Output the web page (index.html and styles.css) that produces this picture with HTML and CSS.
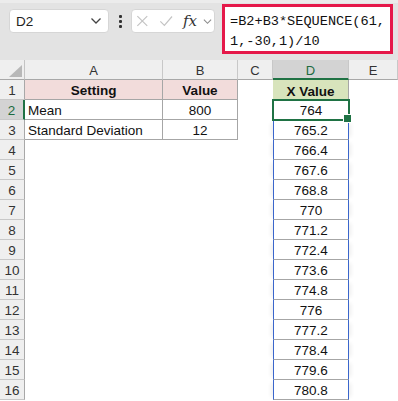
FILE: index.html
```html
<!DOCTYPE html>
<html>
<head>
<meta charset="utf-8">
<link rel="stylesheet" href="styles.css">
</head>
<body>
<div class="app">
  <div class="toolbar">
    <div class="namebox">
      <span class="ref">D2</span>
      <svg class="chev" width="12" height="8" viewBox="0 0 12 8"><path d="M1.5 1.5 L6 6 L10.5 1.5" fill="none" stroke="#444" stroke-width="1.3"/></svg>
    </div>
    <div class="dots"><i></i><i></i><i></i></div>
    <div class="fxbox">
      <svg width="14" height="14" viewBox="0 0 14 14"><path d="M1.5 1.5 L12.5 12.5 M12.5 1.5 L1.5 12.5" stroke="#c4c4c4" stroke-width="1.3" fill="none"/></svg>
      <svg width="16" height="14" viewBox="0 0 16 14"><path d="M1.5 7.5 L6 12 L14.5 2" stroke="#c4c4c4" stroke-width="1.3" fill="none"/></svg>
      <span class="fx">fx</span>
      <svg class="fxchev" width="10" height="7" viewBox="0 0 10 7"><path d="M1 1.5 L5 5.5 L9 1.5" fill="none" stroke="#8a8a8a" stroke-width="1.2"/></svg>
    </div>
    <div class="formula">=B2+B3*SEQUENCE(61,<br>1,-30,1)/10</div>
  </div>
  <div class="grid">
    <div class="corner"><span class="tri"></span></div>
    <div class="ch">A</div><div class="ch">B</div><div class="ch">C</div><div class="ch chsel">D</div><div class="ch">E</div>

    <div class="rh">1</div><div class="c tb th-pink">Setting</div><div class="c tb th-pink">Value</div><div class="c"></div><div class="c th-green">X Value</div><div class="c"></div>
    <div class="rh rhsel">2</div><div class="c tb left">Mean</div><div class="c tb">800</div><div class="c"></div><div class="c sel">764</div><div class="c"></div>
    <div class="rh">3</div><div class="c tb left">Standard Deviation</div><div class="c tb">12</div><div class="c"></div><div class="c sp">765.2</div><div class="c"></div>
    <div class="rh">4</div><div class="c"></div><div class="c"></div><div class="c"></div><div class="c sp">766.4</div><div class="c"></div>
    <div class="rh">5</div><div class="c"></div><div class="c"></div><div class="c"></div><div class="c sp">767.6</div><div class="c"></div>
    <div class="rh">6</div><div class="c"></div><div class="c"></div><div class="c"></div><div class="c sp">768.8</div><div class="c"></div>
    <div class="rh">7</div><div class="c"></div><div class="c"></div><div class="c"></div><div class="c sp">770</div><div class="c"></div>
    <div class="rh">8</div><div class="c"></div><div class="c"></div><div class="c"></div><div class="c sp">771.2</div><div class="c"></div>
    <div class="rh">9</div><div class="c"></div><div class="c"></div><div class="c"></div><div class="c sp">772.4</div><div class="c"></div>
    <div class="rh">10</div><div class="c"></div><div class="c"></div><div class="c"></div><div class="c sp">773.6</div><div class="c"></div>
    <div class="rh">11</div><div class="c"></div><div class="c"></div><div class="c"></div><div class="c sp">774.8</div><div class="c"></div>
    <div class="rh">12</div><div class="c"></div><div class="c"></div><div class="c"></div><div class="c sp">776</div><div class="c"></div>
    <div class="rh">13</div><div class="c"></div><div class="c"></div><div class="c"></div><div class="c sp">777.2</div><div class="c"></div>
    <div class="rh">14</div><div class="c"></div><div class="c"></div><div class="c"></div><div class="c sp">778.4</div><div class="c"></div>
    <div class="rh">15</div><div class="c"></div><div class="c"></div><div class="c"></div><div class="c sp">779.6</div><div class="c"></div>
    <div class="rh">16</div><div class="c"></div><div class="c"></div><div class="c"></div><div class="c sp">780.8</div><div class="c"></div>
  </div>
</div>
</body>
</html>
```
FILE: styles.css
```css
* { box-sizing: border-box; }
html, body { margin: 0; padding: 0; background: #fff; }
body { font-family: "Liberation Sans", Arial, sans-serif; color: #111; }
.app { width: 398px; height: 401px; overflow: hidden; }

.toolbar {
  height: 60px;
  display: flex;
  align-items: flex-start;
  background: linear-gradient(#ececec 0, #ececec 3px, #e3e3e3 3px);
}
.namebox {
  margin: 9px 0 0 9px;
  width: 100px;
  height: 24px;
  background: #fff;
  border: 1px solid #d6d6d6;
  border-radius: 4px;
  display: flex;
  align-items: center;
  justify-content: space-between;
  padding: 0 6px 0 6px;
}
.ref { font-size: 13.5px; color: #222; }
.dots {
  width: 22px;
  height: 24px;
  margin-top: 9px;
  display: flex;
  flex-direction: column;
  align-items: center;
  justify-content: center;
  gap: 2px;
}
.dots i { display: block; width: 3px; height: 3px; background: #333; border-radius: 1px; }
.fxbox {
  margin-top: 9px;
  width: 84px;
  height: 24px;
  background: #fff;
  border: 1px solid #d6d6d6;
  border-radius: 4px;
  display: flex;
  align-items: center;
  padding: 0 2px 0 4px;
  gap: 10px;
}
.fx {
  font-family: "DejaVu Serif", "Liberation Serif", serif;
  font-style: italic;
  font-size: 15px;
  color: #333;
  line-height: 1;
}
.fxchev { margin-left: -4px; }
.formula {
  margin: 4px 0 0 7px;
  width: 171px;
  height: 50px;
  background: #fff;
  border: 3px solid #e5194a;
  font-family: "Liberation Mono", "DejaVu Sans Mono", monospace;
  font-size: 13.6px;
  line-height: 20px;
  padding: 5px 0 0 5px;
  color: #111;
  white-space: nowrap;
}

.grid {
  display: grid;
  grid-template-columns: 25px 138px 75px 35px 76px 49px;
  grid-auto-rows: 20px;
  font-size: 13.5px;
}
.corner {
  background: #efefef;
  border-right: 1px solid #c4c4c4;
  border-bottom: 1px solid #a8a8a8;
  position: relative;
}
.tri {
  position: absolute;
  right: 2px;
  bottom: 2px;
  width: 13px;
  height: 12px;
  background: #b8b8b8;
  clip-path: polygon(100% 0, 100% 100%, 0 100%);
}
.ch {
  background: #efefef;
  border-right: 1px solid #c8c8c8;
  border-bottom: 1px solid #a8a8a8;
  display: flex;
  align-items: center;
  justify-content: center;
  color: #333;
  font-size: 13px;
  padding-top: 1px;
}
.chsel {
  background: #d3d3d3;
  color: #1d6b40;
  border-bottom: 2px solid #1f7244;
  padding-top: 2px;
}
.rh {
  background: #efefef;
  border-right: 1px solid #a8a8a8;
  border-bottom: 1px solid #c8c8c8;
  display: flex;
  align-items: center;
  justify-content: center;
  color: #333;
  font-size: 13.5px;
  padding-top: 1px;
}
.rhsel {
  background: #d3d3d3;
  color: #1d6b40;
  border-right: 2px solid #1f7244;
}
.c {
  display: flex;
  align-items: center;
  justify-content: center;
  padding-top: 2px;
  white-space: nowrap;
  overflow: visible;
}
.c.left { justify-content: flex-start; padding-left: 3px; }
.tb { border-right: 1px solid #a6a6a6; border-bottom: 1px solid #a6a6a6; }
.th-pink { background: #f2dcdb; font-weight: bold; }
.th-green { background: #d8e4bc; font-weight: bold; border-right: 1px solid #a6a6a6; }
.sel {
  position: relative;
  z-index: 2;
  outline: 2px solid #1f7244;
  outline-offset: -1px;
  border-bottom: 1px solid #a6a6a6;
}
.sel::after {
  content: "";
  position: absolute;
  right: -3px;
  bottom: -4px;
  width: 7px;
  height: 7px;
  background: #1f7244;
  border: 1px solid #fff;
}
.sp {
  border-left: 1px solid #3a66cc;
  border-right: 1px solid #3a66cc;
  border-bottom: 1px solid #a6a6a6;
  box-shadow: -5px 0 4px -3px rgba(0,0,0,0.07), 5px 0 4px -3px rgba(0,0,0,0.07);
}
```
